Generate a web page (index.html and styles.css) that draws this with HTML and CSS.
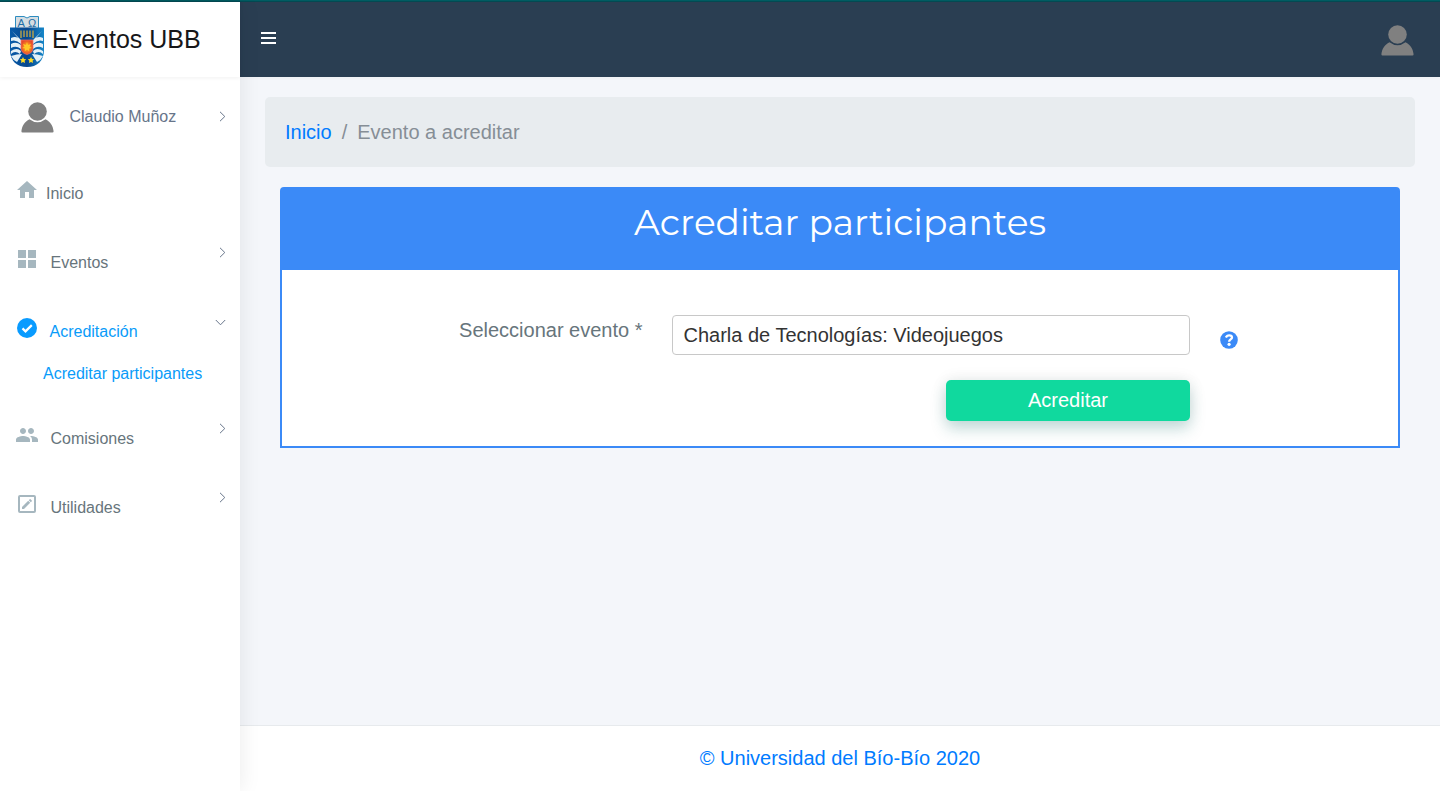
FILE: index.html
```html
<!DOCTYPE html>
<html lang="es">
<head>
<meta charset="utf-8">
<title>Eventos UBB</title>
<link rel="stylesheet" href="styles.css">
</head>
<body>
<svg class="defs" width="0" height="0">
  <symbol id="user" viewBox="0 0 33 31"><circle cx="16.500" cy="9.500" r="9.300"/><path d="M8.500 17.200Q16.500 23.200 24.500 17.200C29.500 19.700 32 24 32.600 29.300Q32.600 30.500 31.500 30.500H1.500Q.400 30.500.400 29.300C1 24 3.500 19.700 8.500 17.200Z"/></symbol>
  <symbol id="chevron" viewBox="0 0 7 11"><path d="M1 .8 5.800 5.500 1 10.200" fill="none" stroke="#67758a" stroke-width="1"/></symbol>
</svg>
<div class="topline"></div>
<div class="app">
  <aside class="sidebar">
    <div class="brand">
      <svg class="crest" width="34" height="52" viewBox="0 0 34 52">
        <defs>
          <linearGradient id="blue" x1="0" x2="1"><stop offset="0" stop-color="#075ba9"/><stop offset=".5" stop-color="#07468d"/><stop offset="1" stop-color="#1687c9"/></linearGradient>
          <radialGradient id="sun"><stop offset="0" stop-color="#ffd72e"/><stop offset=".45" stop-color="#f98c20"/><stop offset="1" stop-color="#e64a2b"/></radialGradient>
        </defs>
        <path d="M5.500.5H14L17 2 20 .5H28.500V13H5.500Z" fill="#d5dde2" stroke="#2d8cc0"/>
        <text x="7.500" y="10.500" class="greek">Α</text><text x="18" y="10.500" class="greek">Ω</text>
        <path d="M0 11.500H34V34C34 45 27 51 17 51S0 45 0 34Z" fill="url(#blue)"/>
        <g fill="#e4f0f6"><path d="M2 15 11 24V28Q6 23 1 25V22Q5 20 8 22ZM32 15 23 24V28Q28 23 33 25V22Q29 20 26 22ZM1 28Q6 25 11 29V33Q6 29 1 32ZM33 28Q28 25 23 29V33Q28 29 33 32ZM1 35Q7 31 11 35L10 38Q5 34 1 38ZM33 35Q27 31 23 35L24 38Q29 34 33 38ZM1 40Q7 38 12 38L7 46Q3 44 1 40ZM33 40Q27 38 22 38L27 46Q31 44 33 40Z"/></g>
        <path d="M11 14.500V22M14 14.500V21M17 14.500V21M20 14.500V21M23 14.500V22" stroke="#c9a843" stroke-width="1.300"/>
        <path d="M11 24H23V32Q23 37 17 38.500 11 37 11 32Z" fill="url(#sun)" stroke="#ef756b" stroke-width=".7"/>
        <path d="m17 26 1 3 3-1-1.500 2.700L22 32l-3 .500.300 3-2.300-2-2.300 2 .300-3-3-.500 2.500-1.300L13 28l3 1Z" fill="#ffc928"/>
        <path id="star" d="m13 41 1 2 2.200.3-1.600 1.500.4 2.200-2-1-2 1 .4-2.200-1.600-1.500 2.200-.3Z" fill="#ffdb24"/><use href="#star" x="8"/>
      </svg>
      <span>Eventos UBB</span>
    </div>
    <div class="profile">
      <svg class="avatar"><use href="#user"/></svg><span>Claudio Muñoz</span><svg class="chev"><use href="#chevron"/></svg>
    </div>
    <nav>
      <a class="item home"><svg class="icon" viewBox="0 0 24 24"><path d="M10 20v-6h4v6h5v-8h3L12 3 2 12h3v8z"/></svg><span>Inicio</span></a>
      <a class="item"><svg class="icon" viewBox="0 0 24 24"><path d="M3 3h8v8H3zm10 0h8v8h-8zM3 13h8v8H3zm10 0h8v8h-8z"/></svg><span>Eventos</span><svg class="chev"><use href="#chevron"/></svg></a>
      <a class="item active"><svg class="icon" viewBox="0 0 24 24"><path d="M12 2a10 10 0 1 0 0 20 10 10 0 0 0 0-20z"/><path d="m7.500 12.400 3 3 6.300-6.300" class="tick"/></svg><span>Acreditación</span><svg class="chev down"><use href="#chevron"/></svg></a>
      <a class="subitem">Acreditar participantes</a>
      <a class="item"><svg class="icon" viewBox="0 0 24 24"><path d="M16 11c1.660 0 2.990-1.340 2.990-3S17.660 5 16 5s-3 1.340-3 3 1.340 3 3 3zm-8 0c1.660 0 2.990-1.340 2.990-3S9.660 5 8 5 5 6.340 5 8s1.340 3 3 3zm0 2c-2.330 0-7 1.170-7 3.500V19h14v-2.500C15 14.170 10.330 13 8 13zm8 0c-.290 0-.620.020-.970.050 1.160.840 1.970 1.970 1.970 3.450V19h6v-2.500c0-2.330-4.670-3.500-7-3.500z"/></svg><span>Comisiones</span><svg class="chev"><use href="#chevron"/></svg></a>
      <a class="item"><svg class="icon" viewBox="0 0 24 24"><path fill-rule="evenodd" d="M5 3h14a2 2 0 0 1 2 2v14a2 2 0 0 1-2 2H5a2 2 0 0 1-2-2V5a2 2 0 0 1 2-2zm0 2v14h14V5z"/><path d="M7 15v2h2l6.200-6.200-2-2zm9.800-5.700a.6.600 0 0 0 0-.8l-1.300-1.300a.6.600 0 0 0-.8 0l-.9 1 2 2z"/></svg><span>Utilidades</span><svg class="chev"><use href="#chevron"/></svg></a>
    </nav>
  </aside>
  <div class="page">
    <header class="topbar"><div class="burger"><i></i><i></i><i></i></div><svg class="avatar"><use href="#user"/></svg></header>
    <main>
      <div class="breadcrumb"><a>Inicio</a><span class="slash">/</span><span>Evento a acreditar</span></div>
      <section class="card">
        <h1>Acreditar participantes</h1>
        <div class="form">
          <label>Seleccionar evento *</label>
          <div class="fields"><div class="select">Charla de Tecnologías: Videojuegos</div><button>Acreditar</button></div>
          <svg class="help" viewBox="0 0 18 18"><circle cx="9" cy="9" r="8.800" fill="#3b8af7"/><path d="M5.900 6.500C6.500 5 7.500 4.300 9.200 4.300c1.600 0 2.800.8 2.800 2.200 0 2-2.900 1.900-2.900 4.200" fill="none" stroke="#fff" stroke-width="2.300"/><circle cx="9.100" cy="13.300" r="1.600" fill="#fff"/></svg>
        </div>
      </section>
    </main>
    <footer>© Universidad del Bío-Bío 2020</footer>
  </div>
</div>
</body>
</html>
```
FILE: styles.css
```css
* { box-sizing: border-box; }
body { margin: 0; height: 791px; overflow: hidden; display: flex; flex-direction: column; background: #f4f6fa; font: 20px/30px "Liberation Sans", Arial, sans-serif; color: #67757c; }
.defs { position: absolute; }
.topline { height: 2px; background: #005c62; border-bottom: 1px solid #044a53; flex: none; }
.app { display: flex; flex: 1; }
.sidebar { width: 240px; flex: none; background: #fff; box-shadow: 1px 0 20px rgba(0,0,0,.08); z-index: 1; font-size: 16px; }
.brand { height: 75px; padding: 14px 0 0 10px; display: flex; gap: 8px; font-size: 25px; line-height: 46px; color: #171719; box-shadow: 0 1px 4px rgba(0,0,0,.06); }
.greek { font: 11px "Liberation Sans", sans-serif; fill: #216da7; }
.profile { height: 82px; padding: 24px 14px 0 21px; display: flex; gap: 15.500px; line-height: 32px; color: #67758a; }
.avatar { width: 33px; height: 31px; fill: #808080; flex: none; }
.profile .avatar { margin-top: 1px; }
.chev { width: 7px; height: 11px; margin: 10px 0 0 auto; flex: none; }
.item { height: 69px; padding: 19px 14px 0 15px; display: flex; gap: 11.500px; line-height: 32px; }
.home { gap: 7px; }
.icon { width: 24px; height: 24px; fill: #a6b7bf; flex: none; }
.item .chev { margin-top: 0; }
.item .down { transform: rotate(90deg); margin-right: 2px; margin-top: 1px; }
.active, .subitem { color: #099bf9; }
.active { gap: 10.500px; }
.active .icon { fill: #099bff; }
.tick { fill: none; stroke: #fff; stroke-width: 2.200; }
.subitem { display: block; height: 38px; padding-left: 43px; margin-top: -8px; margin-bottom: 8px; line-height: 32px; }
.page { flex: 1; display: flex; flex-direction: column; }
.topbar { height: 75px; background: #2a3e52; display: flex; justify-content: space-between; padding: 23px 26px 0 21px; box-shadow: 0 1px 4px rgba(0,0,0,.03); }
.burger { width: 15px; display: flex; flex-direction: column; gap: 3px; padding-top: 7px; }
.burger i { height: 2px; background: #fff; }
main { flex: 1; padding: 20px 25px; }
.breadcrumb { height: 70px; padding: 20px; background: #e8ecef; border-radius: 5px; color: #868e96; display: flex; }
.breadcrumb a { color: #007bff; }
.slash { margin: 0 10px; }
.card { margin: 20px 15px; height: 261px; border: 2px solid #3b8af7; border-radius: 4px 4px 0 0; background: #fff; }
h1 { margin: 0; height: 81px; background: #3b8af7; color: #fff; text-align: center; font: 400 36px/67px Montserrat, Inter, sans-serif; }
.form { display: flex; padding-top: 45px; }
label { width: 390px; padding-right: 29.500px; text-align: right; white-space: nowrap; }
.fields { width: 518px; display: flex; flex-direction: column; }
.select { height: 40px; border: 1px solid #c8c8c8; border-radius: 4px; padding: 4px 10.500px; color: #333; }
button { width: 244px; height: 41px; padding: 0 0 2px; margin: 25px 0 0 auto; border: 0; border-radius: 5px; background: #10d99e; color: #fff; font: 20px/30px "Liberation Sans", Arial, sans-serif; box-shadow: 0 8px 16px rgba(0,111,106,.22), 0 0 16px rgba(0,0,0,.08); }
.help { width: 18px; height: 18px; margin: 16px 0 0 30px; }
footer { height: 66px; border-top: 1px solid #e7eaed; background: #fff; text-align: center; padding-top: 17px; color: #007bff; }
```
